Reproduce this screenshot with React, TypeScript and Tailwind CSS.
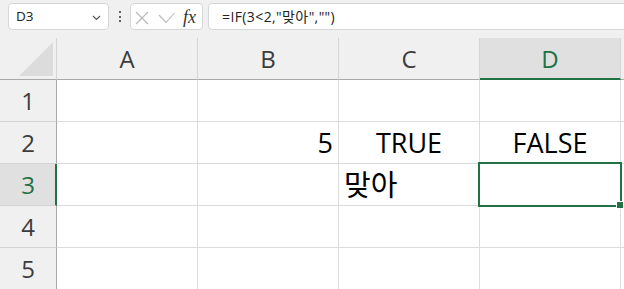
export default function App() {
  const cols = ['A', 'B', 'C', 'D'];
  const rows = [1, 2, 3, 4, 5];
  const cellData: Record<string, { text: string; align: string }> = {
    B2: { text: '5', align: 'justify-end pr-[5px] text-[27px]' },
    C2: { text: 'TRUE', align: 'justify-center text-[27px]' },
    D2: { text: 'FALSE', align: 'justify-center text-[27px]' },
    C3: { text: '맞아', align: 'justify-start pl-[5px] text-[29px]' },
  };
  return (
    <div className="relative h-[289px] w-[624px] overflow-hidden bg-[#f0f0f0] font-['Open_Sans','Noto_Sans_CJK_KR',sans-serif]">
      {/* formula bar */}
      <div className="flex h-[38px] items-start pt-[3px]">
        <div className="ml-[8px] flex h-[27px] w-[101px] shrink-0 items-center justify-between rounded-[4px] border border-[#d6d6d6] bg-white pl-[7px] pr-[7px]">
          <span className="text-[13.5px] leading-none text-[#222]">D3</span>
          <svg width="9" height="6" viewBox="0 0 9 6" className="mt-[2px]">
            <polyline points="1,1 4.5,4.5 8,1" fill="none" stroke="#555" strokeWidth="1.2" />
          </svg>
        </div>
        <div className="flex h-[27px] w-[21px] shrink-0 flex-col items-center justify-center gap-[2.5px]">
          <div className="h-[2px] w-[2px] rounded-full bg-[#333]" />
          <div className="h-[2px] w-[2px] rounded-full bg-[#333]" />
          <div className="h-[2px] w-[2px] rounded-full bg-[#333]" />
        </div>
        <div className="flex h-[27px] w-[73px] shrink-0 items-center rounded-[4px] border border-[#d6d6d6] bg-white pl-[4px]">
          <svg width="14" height="14" viewBox="0 0 14 14" className="mt-[2px]">
            <line x1="1" y1="1" x2="13" y2="13" stroke="#b8b8b8" strokeWidth="1.1" />
            <line x1="13" y1="1" x2="1" y2="13" stroke="#b8b8b8" strokeWidth="1.1" />
          </svg>
          <svg width="17" height="12" viewBox="0 0 17 12" className="ml-[9px] mt-[2px]">
            <polyline points="1,3 8,10.5 16.5,1" fill="none" stroke="#b8b8b8" strokeWidth="1.1" />
          </svg>
          <span className="ml-[8px] font-['Liberation_Serif',serif] text-[18px] italic leading-none text-[#333]">fx</span>
        </div>
        <div className="ml-[5px] mr-[-20px] flex h-[27px] flex-1 items-center rounded-[4px] border border-[#d6d6d6] bg-white pl-[13px]">
          <span className="text-[14px] leading-none tracking-[0.4px] text-[#222]">=IF(3&lt;2,"맞아","")</span>
        </div>
      </div>

      {/* header row */}
      <div className="flex h-[42px]">
        <div className="relative h-[42px] w-[57px] shrink-0 border-b border-r border-b-[#a8a8a8] border-r-[#d4d4d4]">
          <svg width="57" height="42" className="absolute left-0 top-0">
            <polygon points="53,4 53,38 19,38" fill="#dcdcdc" />
          </svg>
        </div>
        {cols.map((c) => {
          const sel = c === 'D';
          return (
            <div
              key={c}
              className={
                sel
                  ? 'flex h-[42px] w-[141px] shrink-0 items-center justify-center border-b-2 border-r border-b-[#217346] border-r-[#d4d4d4] bg-[#e0e0e0] pt-[2px] text-[24px] text-[#217346]'
                  : 'flex h-[42px] w-[141px] shrink-0 items-center justify-center border-b border-r border-b-[#a8a8a8] border-r-[#d4d4d4] text-[24px] text-[#3c3c3c]'
              }
            >
              {c}
            </div>
          );
        })}
        <div className="h-[42px] flex-1 border-b border-b-[#a8a8a8]" />
      </div>

      {/* rows */}
      {rows.map((r) => (
        <div key={r} className="flex h-[42px]">
          <div
            className={
              r === 3
                ? 'flex h-[42px] w-[57px] shrink-0 items-center justify-center border-b border-r-2 border-b-[#d4d4d4] border-r-[#217346] bg-[#e0e0e0] text-[24px] text-[#217346]'
                : 'flex h-[42px] w-[57px] shrink-0 items-center justify-center border-b border-r border-b-[#d4d4d4] border-r-[#a8a8a8] text-[24px] text-[#3c3c3c]'
            }
          >
            <span className={r === 3 ? 'pl-[1px]' : ''}>{r}</span>
          </div>
          {cols.map((c) => {
            const d = cellData[c + r];
            return (
              <div
                key={c}
                className={
                  'flex h-[42px] w-[141px] shrink-0 items-center border-b border-r border-[#dcdcdc] bg-white leading-[42px] text-black ' +
                  (d ? d.align : '')
                }
              >
                {d ? d.text : ''}
              </div>
            );
          })}
          <div className="h-[42px] flex-1 border-b border-[#dcdcdc] bg-white" />
        </div>
      ))}

      {/* selection */}
      <div className="absolute left-[478px] top-[162px] h-[45px] w-[144px] border-2 border-[#217346]" />
      <div className="absolute left-[616px] top-[201px] h-[8px] w-[8px] border border-white bg-[#217346]" />
    </div>
  );
}
